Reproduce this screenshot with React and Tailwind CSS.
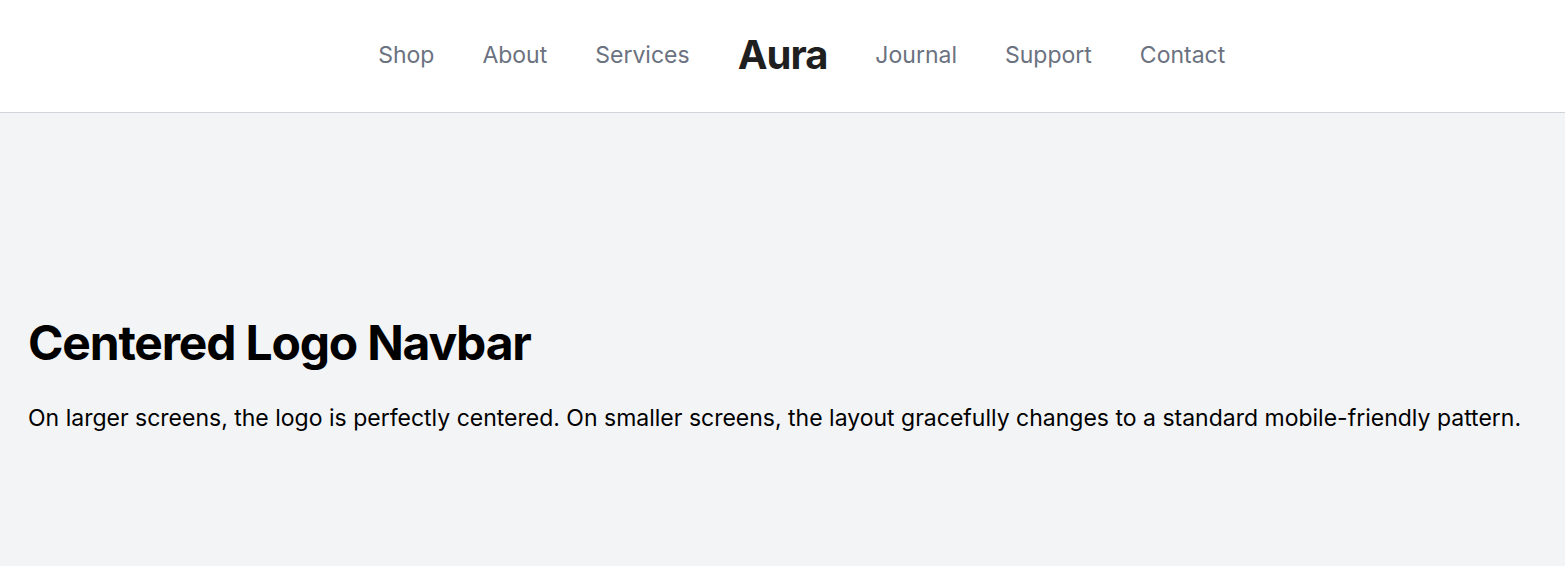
export default function App() {
  const left = ["Shop", "About", "Services"];
  const right = ["Journal", "Support", "Contact"];

  return (
    <div className="min-h-screen bg-[#f3f4f6] font-['Inter',sans-serif]">
      <header className="h-[113px] bg-white border-b border-[#d1d5db] flex items-center">
        <nav className="w-full grid grid-cols-[1fr_auto_1fr] items-center gap-12 -mt-0.5">
          <div className="flex justify-end gap-12">
            {left.map((item) => (
              <a key={item} href="#" className="text-[23px] text-[#6b7280]">
                {item}
              </a>
            ))}
          </div>
          <a href="#" className="text-[40px] font-bold text-[#1f1f1f] tracking-tight">
            Aura
          </a>
          <div className="flex justify-start gap-12">
            {right.map((item) => (
              <a key={item} href="#" className="text-[23px] text-[#6b7280]">
                {item}
              </a>
            ))}
          </div>
        </nav>
      </header>

      <main className="px-7 pt-[200px]">
        <h1 className="text-[48px] font-bold text-black tracking-tight leading-tight">
          Centered Logo Navbar
        </h1>
        <p className="mt-7 text-[23px] text-black">
          On larger screens, the logo is perfectly centered. On smaller screens, the layout gracefully changes to a standard mobile-friendly pattern.
        </p>
      </main>
    </div>
  );
}
